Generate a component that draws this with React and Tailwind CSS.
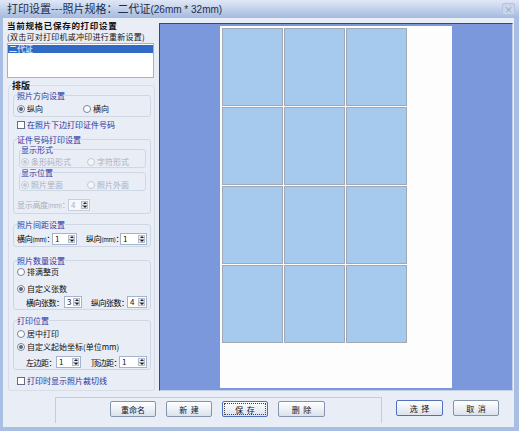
import React from "react";

const cjk = "font-['Noto_Sans_CJK_SC','Liberation_Sans',sans-serif]";

function Radio({ checked, disabled, label }) {
  return (
    <span className="flex h-[9px] items-center gap-[2px]">
      <span
        className={
          disabled
            ? "flex h-[8px] w-[8px] items-center justify-center rounded-full border border-[#c3c9d6] bg-[#f4f6fa]"
            : "flex h-[8px] w-[8px] items-center justify-center rounded-full border border-[#75849c] bg-white"
        }
      >
        {checked && (
          <span
            className={
              disabled
                ? "h-[4px] w-[4px] rounded-full bg-[#c3c9d6]"
                : "h-[4px] w-[4px] rounded-full bg-[#5a6578]"
            }
          />
        )}
      </span>
      <span className={disabled ? "text-[#a9b0be]" : "text-[#111]"}>{label}</span>
    </span>
  );
}

function Check({ label }) {
  return (
    <span className="flex h-[9px] items-center gap-[2px]">
      <span className="h-[8px] w-[8px] border border-[#5f6f8a] bg-white" />
      <span className="text-[#28329a]">{label}</span>
    </span>
  );
}

function Spin({ value, w, disabled }) {
  return (
    <span
      className={
        (disabled
          ? "flex h-[12px] shrink-0 items-stretch border border-[#c6cedd] bg-[#f7f8fb] "
          : "flex h-[12px] shrink-0 items-stretch border border-[#a5b4cc] bg-white ") + w
      }
    >
      <span
        className={
          disabled
            ? "flex-1 pl-[2px] text-[8px] leading-[10px] text-[#a9b0be]"
            : "flex-1 pl-[2px] text-[8px] leading-[10px] text-[#111]"
        }
      >
        {value}
      </span>
      <span className="my-[1px] mr-[1px] flex w-[7px] flex-col border border-[#b5bccb] bg-[#e6e9ef]">
        <span className="flex flex-1 items-center justify-center">
          <span className="h-0 w-0 border-x-[2px] border-b-[2px] border-x-transparent border-b-[#222]" />
        </span>
        <span className="h-px bg-[#8e97a8]" />
        <span className="flex flex-1 items-center justify-center">
          <span className="h-0 w-0 border-x-[2px] border-t-[2px] border-x-transparent border-t-[#222]" />
        </span>
      </span>
    </span>
  );
}

function Group({ title, className, children }) {
  return (
    <fieldset className={"rounded-[3px] border border-[#cfd6e4] " + className}>
      <legend className="text-[8px] leading-[9px] text-[#2c36a0]">{title}</legend>
      {children}
    </fieldset>
  );
}

function Btn({ children, w, primary, focus }) {
  return (
    <div
      className={
        (primary
          ? "flex h-[16px] items-stretch rounded-[2px] border border-[#4f6fbf] bg-gradient-to-b from-white to-[#dbe2ee] p-[1px] "
          : "flex h-[16px] items-stretch rounded-[2px] border border-[#8593ab] bg-gradient-to-b from-white to-[#dbe2ee] p-[1px] ") + w
      }
    >
      <span
        className={
          focus
            ? "flex flex-1 items-center justify-center whitespace-pre border border-dotted border-[#444] text-[8px] leading-[9px] text-[#111]"
            : "flex flex-1 items-center justify-center whitespace-pre border border-transparent text-[8px] leading-[9px] text-[#111]"
        }
      >
        {children}
      </span>
    </div>
  );
}

export default function App() {
  const tiles = Array.from({ length: 12 });
  return (
    <div className={"flex h-[431px] w-[519px] flex-col bg-[#a9bee3] " + cjk}>
      {/* title bar */}
      <div className="flex h-[18px] items-center bg-gradient-to-b from-[#e0e8f6] to-[#a5badf] pl-[7px] pr-[4px]">
        <span className="text-[11px] leading-[12px] text-[#1f2d4d]">
          打印设置---照片规格：二代证
          <span className="font-['Liberation_Sans',sans-serif] text-[10px]">(26mm * 32mm)</span>
        </span>
        <span className="ml-auto flex h-[12px] w-[13px] items-center justify-center rounded-[2px] border border-[#b4c4de] bg-[#c9d6ec] text-[9px] leading-none text-[#8c9cb8]">
          ×
        </span>
      </div>

      {/* body */}
      <div className="mb-[4px] ml-[3px] mr-[5px] flex flex-1 flex-col bg-[#e9edf6]">
        <div className="flex gap-[5px] pl-[4px] pt-[1px]">
          {/* left column */}
          <div className="flex h-[372px] w-[147px] flex-col">
            <div className="whitespace-nowrap text-[8.5px] font-bold leading-[12px] tracking-[0.7px] text-[#111]">
              当前规格已保存的打印设置
            </div>
            <div className="whitespace-nowrap text-[8px] leading-[12px] tracking-[0.25px] text-[#111]">
              (双击可对打印机或冲印进行重新设置)
            </div>
            <div className="h-[35px] border border-[#a3b1c9] bg-white pt-[1px]">
              <div className="h-[8px] bg-[#316ac5] pl-[1px] text-[8px] leading-[8px] text-white">二代证</div>
            </div>

            <fieldset className="ml-[1px] mt-[3px] flex-1 rounded-[3px] border border-[#d6dce8] px-[3px] pt-[1px]">
              <legend className="text-[9px] font-bold leading-[9px] text-[#111]">排版</legend>

              <Group title="照片方向设置" className="ml-[1px] px-[3px] pb-[3px] pt-[4px] text-[8px] leading-[9px]">
                <div className="flex">
                  <div className="w-[66px]">
                    <Radio checked label="纵向" />
                  </div>
                  <Radio label="横向" />
                </div>
              </Group>

              <div className="ml-[5px] mt-[3px] text-[8px] leading-[9px]">
                <Check label="在照片下边打印证件号码" />
              </div>

              <Group title="证件号码打印设置" className="ml-[1px] mt-[6px] px-[3px] pb-[2px] text-[8px] leading-[9px]">
                <Group title="显示形式" className="ml-[2px] mr-[1px] mt-[1px] px-[1px] pb-[1px] pt-[3px]">
                  <div className="flex">
                    <div className="w-[66px]">
                      <Radio checked disabled label="条形码形式" />
                    </div>
                    <Radio disabled label="字符形式" />
                  </div>
                </Group>
                <Group title="显示位置" className="ml-[2px] mr-[1px] px-[1px] pb-[1px] pt-[3px]">
                  <div className="flex">
                    <div className="w-[66px]">
                      <Radio checked disabled label="照片里面" />
                    </div>
                    <Radio disabled label="照片外面" />
                  </div>
                </Group>
                <div className="mt-[8px] flex items-center">
                  <span className="w-[51px] whitespace-nowrap tracking-[-0.3px] text-[#a9b0be]">
                    显示高度<span className="text-[6px]">(mm)</span>：
                  </span>
                  <Spin value="4" w="w-[22px]" disabled />
                </div>
              </Group>

              <Group title="照片间距设置" className="ml-[1px] mt-[6px] px-[3px] pb-[1px] pt-[4px] text-[8px] leading-[9px]">
                <div className="flex items-center">
                  <span className="w-[35px] whitespace-nowrap tracking-[-0.3px]">
                    横向<span className="text-[6px]">(mm)</span>：
                  </span>
                  <Spin value="1" w="w-[25px]" />
                  <span className="ml-[9px] w-[34px] whitespace-nowrap tracking-[-0.3px]">
                    纵向<span className="text-[6px]">(mm)</span>：
                  </span>
                  <Spin value="1" w="w-[27px]" />
                </div>
              </Group>

              <Group title="照片数量设置" className="ml-[1px] mt-[9px] px-[3px] pb-[1px] pt-[2px] text-[8px] leading-[9px]">
                <Radio label="排满整页" />
                <div className="mt-[8px]">
                  <Radio checked label="自定义张数" />
                </div>
                <div className="mt-[3px] flex items-center pl-[9px]">
                  <span className="w-[38px] whitespace-nowrap tracking-[-0.5px]">横向张数：</span>
                  <Spin value="3" w="w-[18px]" />
                  <span className="ml-[9px] w-[36px] whitespace-nowrap tracking-[-0.5px]">纵向张数：</span>
                  <Spin value="4" w="w-[20px]" />
                </div>
              </Group>

              <Group title="打印位置" className="ml-[1px] mt-[6px] px-[3px] pb-[1px] pt-[4px] text-[8px] leading-[9px]">
                <Radio label="居中打印" />
                <div className="mt-[4px]">
                  <Radio checked label="自定义起始坐标(单位mm)" />
                </div>
                <div className="mt-[5px] flex items-center pl-[9px]">
                  <span className="w-[30px] whitespace-nowrap tracking-[-0.5px]">左边距：</span>
                  <Spin value="1" w="w-[25px]" />
                  <span className="ml-[10px] w-[28px] whitespace-nowrap tracking-[-0.5px]">顶边距：</span>
                  <Spin value="1" w="w-[28px]" />
                </div>
              </Group>

              <div className="ml-[5px] mt-[6px] text-[8px] leading-[9px]">
                <Check label="打印时显示照片裁切线" />
              </div>
            </fieldset>
          </div>

          {/* preview */}
          <div className="mt-[4px] flex h-[368px] w-[354px] justify-center border-b border-l border-r border-t border-b-[#c3cfe6] border-l-[#3c4868] border-r-[#c3cfe6] border-t-[#3c4868] bg-[#7b98dd] pt-[2px]">
            <div className="h-[362px] w-[232px] bg-[#fdfdfd] pl-[2px] pt-[2px]">
              <div className="grid grid-cols-[repeat(3,61px)] grid-rows-[repeat(4,78px)] gap-[1px]">
                {tiles.map((_, i) => (
                  <div key={i} className="border border-[#9ea8b6] bg-[#a6c9ee]" />
                ))}
              </div>
            </div>
          </div>
        </div>

        {/* bottom bar */}
        <div className="flex flex-1 items-start">
          <div className="ml-[52px] mt-[6px] flex h-[26px] w-[327px] gap-[10px] border-l border-r border-t border-[#c7ccd8] pl-[54px] pt-[3px]">
            <Btn w="w-[46px]">重命名</Btn>
            <Btn w="w-[46px]">{"新  建"}</Btn>
            <Btn w="w-[46px]" primary focus>{"保  存"}</Btn>
            <Btn w="w-[47px]">{"删  除"}</Btn>
          </div>
          <div className="ml-[14px] mt-[9px] flex gap-[10px]">
            <Btn w="w-[47px]" primary>{"选  择"}</Btn>
            <Btn w="w-[46px]">{"取  消"}</Btn>
          </div>
        </div>
      </div>
    </div>
  );
}
